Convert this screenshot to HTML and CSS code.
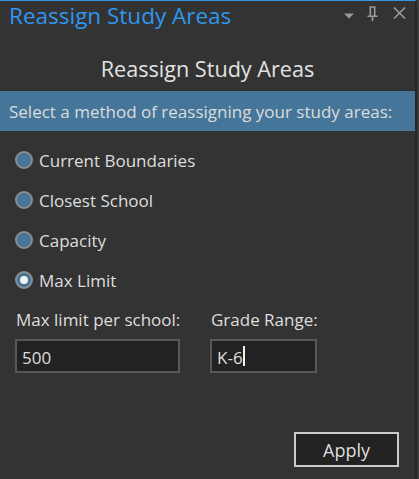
FILE: index.html
```html
<!DOCTYPE html>
<html>
<head>
<meta charset="utf-8">
<link rel="stylesheet" href="styles.css">
</head>
<body>
<div class="panel">
  <div class="titlebar">
    <span class="title">Reassign Study Areas</span>
    <div class="tools">
      <svg class="ico tri" width="10" height="6" viewBox="0 0 10 6"><path d="M0 0.5H10L5 5.5Z" fill="#9a9a9a"/></svg>
      <svg class="ico pin" width="11" height="15" viewBox="0 0 11 15"><path d="M2.5 1H8.5M3.3 1V10M7.7 1V10M0.5 10.2H10.5M5.5 10.2V15" stroke="#9a9a9a" stroke-width="1.6" fill="none"/></svg>
      <svg class="ico cls" width="13" height="12" viewBox="0 0 13 12"><path d="M1 0.5L12 11.5M12 0.5L1 11.5" stroke="#9a9a9a" stroke-width="1.6" fill="none"/></svg>
    </div>
  </div>
  <div class="heading">Reassign Study Areas</div>
  <div class="band">Select a method of reassigning your study areas:</div>
  <div class="options">
    <label class="opt"><span class="radio"></span><span>Current Boundaries</span></label>
    <label class="opt"><span class="radio"></span><span>Closest School</span></label>
    <label class="opt"><span class="radio"></span><span>Capacity</span></label>
    <label class="opt"><span class="radio on"></span><span>Max Limit</span></label>
  </div>
  <div class="fields">
    <div class="field f1">
      <div class="flabel">Max limit per school:</div>
      <div class="input wide"><span>500</span></div>
    </div>
    <div class="field">
      <div class="flabel">Grade Range:</div>
      <div class="input narrow"><span>K-6</span><span class="caret"></span></div>
    </div>
  </div>
  <div class="footer">
    <div class="btn">Apply</div>
  </div>
</div>
</body>
</html>
```
FILE: styles.css
```css
html, body {
  margin: 0;
  padding: 0;
}
body {
  background: #3b3b3b;
  width: 419px;
  height: 479px;
  overflow: hidden;
  font-family: "Open Sans", "Noto Sans", sans-serif;
  color: #dedede;
}
.panel {
  box-sizing: border-box;
  width: 417px;
  height: 479px;
  background: #333333;
  border-top: 1px solid #2f96ee;
  border-right: 2px solid #272727;
}
.titlebar {
  display: flex;
  justify-content: space-between;
  height: 36px;
  padding-left: 9px;
}
.title {
  font-size: 22.5px;
  line-height: 30px;
  color: #2f96ee;
  white-space: nowrap;
}
.tools {
  display: flex;
  align-items: flex-start;
  padding-right: 9px;
}
.ico { display: block; }
.tri { margin-top: 12px; }
.pin { margin-top: 5px; margin-left: 13px; }
.cls { margin-top: 6px; margin-left: 15px; }
.heading {
  text-align: center;
  font-size: 21.6px;
  line-height: 30px;
  padding-top: 17px;
  padding-bottom: 7px;
  color: #e2e2e2;
  white-space: nowrap;
}
.band {
  background: #457699;
  height: 38px;
  padding-top: 2px;
  line-height: 38px;
  font-size: 17px;
  padding-left: 9px;
  color: #dcdcdc;
  white-space: nowrap;
}
.options {
  padding-top: 9px;
  padding-left: 15px;
}
.opt {
  display: flex;
  align-items: center;
  height: 40px;
  font-size: 17px;
  gap: 6px;
}
.radio {
  box-sizing: border-box;
  width: 18px;
  height: 18px;
  border-radius: 50%;
  border: 2px solid #8c8c8c;
  background: #457699;
  display: flex;
  align-items: center;
  justify-content: center;
}
.radio.on::after {
  content: "";
  width: 8px;
  height: 8px;
  border-radius: 50%;
  background: #f2f2f2;
}
.fields {
  display: flex;
  padding-top: 8px;
  padding-left: 15px;
  gap: 30px;
}
.f1 { width: 165px; }
.flabel {
  font-size: 17px;
  line-height: 24px;
  padding-left: 1px;
  margin-bottom: 7px;
  white-space: nowrap;
}
.input {
  box-sizing: border-box;
  height: 34px;
  border: 2px solid #575757;
  background: #222222;
  font-size: 17px;
  padding-top: 2px;
  padding-left: 5px;
  display: flex;
  align-items: center;
}
.input.wide { width: 165px; }
.input.narrow { width: 107px; }
.caret {
  width: 2px;
  height: 20px;
  margin-top: -2px;
  background: #f0f0f0;
}
.footer {
  display: flex;
  justify-content: flex-end;
  padding-top: 59px;
  padding-right: 16px;
}
.btn {
  box-sizing: border-box;
  width: 105px;
  height: 35px;
  border: 2px solid #cacaca;
  background: #222222;
  display: flex;
  align-items: center;
  justify-content: center;
  font-size: 18px;
}
```
